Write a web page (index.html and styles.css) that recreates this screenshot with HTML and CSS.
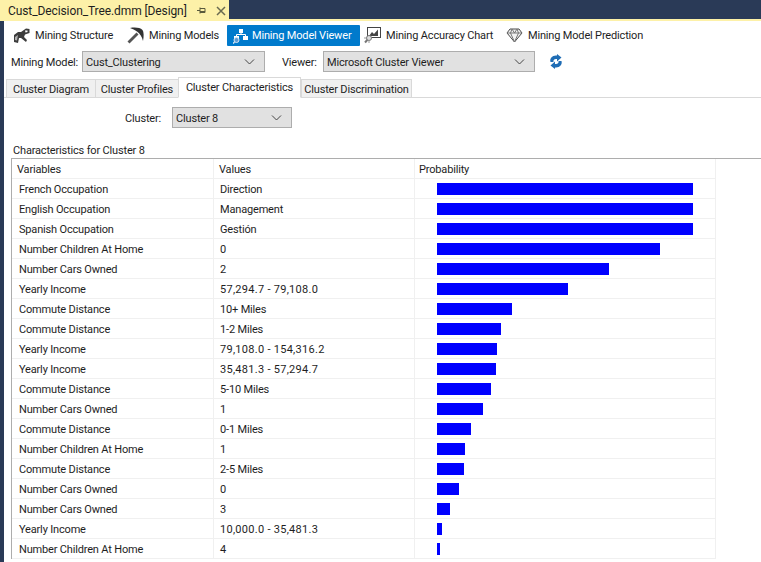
FILE: index.html
```html
<!doctype html>
<html lang="en">
<head>
    <meta charset="UTF-8">
    <title>Cust_Decision_Tree.dmm [Design]</title>
    <link rel="stylesheet" href="styles.css">
</head>
<body>
<div class="doc-bar">
    <div class="doc-tab">
        <span class="doc-title">Cust_Decision_Tree.dmm [Design]</span>
        <svg class="doc-pin" width="9" height="9" viewBox="0 0 9 9"><path d="M0 4.500H3M3 1.500V7.500M3 2.500H8V6.500H3M3 5.500H8" fill="none" stroke="#5a5a3c"/></svg>
        <svg class="doc-close" width="10" height="10" viewBox="0 0 10 10"><path d="M1 1L9 9M9 1L1 9" stroke="#6a6a50" stroke-width="1.500"/></svg>
    </div>
</div>
<div class="doc-line"></div>
<div class="page">
    <div class="toolbar">
        <a class="tool tool-structure">
            <svg width="17" height="17" viewBox="0 0 17 17"><path d="M1 8L5 5H8L13 1.500L16.500 2V6L12 7.500L11 10L14 13L13 15L8 11L6 11L5 16L1 15Z" fill="#3c3c3c"/><path d="M12 3.500H14.500V5L12.500 5.500Z" fill="#fff"/><path d="M2 10L5 8L4 13.500L2 13Z" fill="#b0b0b0"/></svg>
            <span>Mining Structure</span>
        </a>
        <a class="tool tool-models">
            <svg width="17" height="17" viewBox="0 0 17 17"><path d="M0.500 14.500L9.500 5.500L11.500 7.500L2.500 16.500Z" fill="#555"/><path d="M3 1C8 0 13 0.500 15.500 3C16.800 5 17 9 16 14C15 10 13 6.500 10 4.500C8 3 5.500 2 3 1Z" fill="#333"/></svg>
            <span>Mining Models</span>
        </a>
        <a class="tool tool-viewer">
            <svg width="16" height="16" viewBox="0 0 16 16"><path d="M6 1H10V5H6ZM1 8H6V12H1ZM10 8H15V12H10Z" fill="#fff"/><path d="M8 5V7M3.500 8V6.500H12.500V8" fill="none" stroke="#fff"/><circle cx="3.500" cy="12" r="2.500" fill="#5c9bd4" stroke="#d8e6f2"/><path d="M1.500 14L0 15.500" stroke="#d8e6f2" stroke-width="1.500"/></svg>
            <span>Mining Model Viewer</span>
        </a>
        <a class="tool tool-accuracy">
            <svg width="17" height="17" viewBox="0 0 17 17"><rect x="3.500" y="0.500" width="13" height="10" fill="#fff" stroke="#444"/><path d="M5 9L8 5L10 7L14 2.500V9Z" fill="#444"/><path d="M5 11L1 15.500" stroke="#777" stroke-width="2"/><circle cx="5" cy="11" r="2.500" fill="#ddd" stroke="#777"/><path d="M5 13V16M2 11H0" stroke="#999"/></svg>
            <span>Mining Accuracy Chart</span>
        </a>
        <a class="tool tool-prediction">
            <svg width="17" height="15" viewBox="0 0 17 15"><path d="M4 1H13L16 5L8.500 14L1 5Z" fill="#f2f2f2" stroke="#4a4a4a"/><path d="M1 5H16M6 1L4.500 5L8.500 14L12.500 5L11 1M6 1L8.500 5L11 1" fill="none" stroke="#777"/></svg>
            <span>Mining Model Prediction</span>
        </a>
    </div>

    <div class="model-row">
        <label class="model-label">Mining Model:</label>
        <div class="combo combo-model"><span>Cust_Clustering</span><svg width="11" height="6" viewBox="0 0 11 6"><path d="M1 0.500L5.500 5L10 0.500" fill="none" stroke="#444"/></svg></div>
        <label class="viewer-label">Viewer:</label>
        <div class="combo combo-viewer"><span>Microsoft Cluster Viewer</span><svg width="11" height="6" viewBox="0 0 11 6"><path d="M1 0.500L5.500 5L10 0.500" fill="none" stroke="#444"/></svg></div>
        <svg class="refresh" width="14" height="15" viewBox="0 0 14 15">
            <path d="M1.500 8C0.500 4.500 3 1.500 7 1.500H8V0L12.500 3.500L8 7.500V5H7C5 5 4 6.500 4.500 8Z" fill="#1f6db5"/>
            <path d="M12.500 7C13.500 10.500 11 13.500 7 13.500H6V15L1.500 11.500L6 7.500V10H7C9 10 10 8.500 9.500 7Z" fill="#1f6db5"/>
        </svg>
    </div>

    <div class="tabs">
        <div class="tab tab-diagram">Cluster Diagram</div>
        <div class="tab tab-profiles">Cluster Profiles</div>
        <div class="tab tab-active">Cluster Characteristics</div>
        <div class="tab tab-discrimination">Cluster Discrimination</div>
    </div>

    <div class="cluster-row">
        <label class="cluster-label">Cluster:</label>
        <div class="combo combo-cluster"><span>Cluster 8</span><svg width="11" height="6" viewBox="0 0 11 6"><path d="M1 0.500L5.500 5L10 0.500" fill="none" stroke="#444"/></svg></div>
    </div>

    <div class="caption">Characteristics for Cluster 8</div>

    <div class="grid">
        <div class="row head">
            <div class="cell">Variables</div>
            <div class="cell">Values</div>
            <div class="cell">Probability</div>
        </div>
        <div class="row"><div class="cell">French Occupation</div><div class="cell">Direction</div><div class="cell bar-cell"><div class="bar" style="width:256px"></div></div></div>
        <div class="row"><div class="cell">English Occupation</div><div class="cell">Management</div><div class="cell bar-cell"><div class="bar" style="width:256px"></div></div></div>
        <div class="row"><div class="cell">Spanish Occupation</div><div class="cell">Gestión</div><div class="cell bar-cell"><div class="bar" style="width:256px"></div></div></div>
        <div class="row"><div class="cell">Number Children At Home</div><div class="cell">0</div><div class="cell bar-cell"><div class="bar" style="width:223px"></div></div></div>
        <div class="row"><div class="cell">Number Cars Owned</div><div class="cell">2</div><div class="cell bar-cell"><div class="bar" style="width:172px"></div></div></div>
        <div class="row"><div class="cell">Yearly Income</div><div class="cell num">57,294.7 - 79,108.0</div><div class="cell bar-cell"><div class="bar" style="width:131px"></div></div></div>
        <div class="row"><div class="cell">Commute Distance</div><div class="cell">10+ Miles</div><div class="cell bar-cell"><div class="bar" style="width:75px"></div></div></div>
        <div class="row"><div class="cell">Commute Distance</div><div class="cell">1-2 Miles</div><div class="cell bar-cell"><div class="bar" style="width:64px"></div></div></div>
        <div class="row"><div class="cell">Yearly Income</div><div class="cell num">79,108.0 - 154,316.2</div><div class="cell bar-cell"><div class="bar" style="width:60px"></div></div></div>
        <div class="row"><div class="cell">Yearly Income</div><div class="cell num">35,481.3 - 57,294.7</div><div class="cell bar-cell"><div class="bar" style="width:59px"></div></div></div>
        <div class="row"><div class="cell">Commute Distance</div><div class="cell">5-10 Miles</div><div class="cell bar-cell"><div class="bar" style="width:54px"></div></div></div>
        <div class="row"><div class="cell">Number Cars Owned</div><div class="cell">1</div><div class="cell bar-cell"><div class="bar" style="width:46px"></div></div></div>
        <div class="row"><div class="cell">Commute Distance</div><div class="cell">0-1 Miles</div><div class="cell bar-cell"><div class="bar" style="width:34px"></div></div></div>
        <div class="row"><div class="cell">Number Children At Home</div><div class="cell">1</div><div class="cell bar-cell"><div class="bar" style="width:28px"></div></div></div>
        <div class="row"><div class="cell">Commute Distance</div><div class="cell">2-5 Miles</div><div class="cell bar-cell"><div class="bar" style="width:27px"></div></div></div>
        <div class="row"><div class="cell">Number Cars Owned</div><div class="cell">0</div><div class="cell bar-cell"><div class="bar" style="width:22px"></div></div></div>
        <div class="row"><div class="cell">Number Cars Owned</div><div class="cell">3</div><div class="cell bar-cell"><div class="bar" style="width:13px"></div></div></div>
        <div class="row"><div class="cell">Yearly Income</div><div class="cell num">10,000.0 - 35,481.3</div><div class="cell bar-cell"><div class="bar" style="width:5px"></div></div></div>
        <div class="row"><div class="cell">Number Children At Home</div><div class="cell">4</div><div class="cell bar-cell"><div class="bar" style="width:3px"></div></div></div>
    </div>
</div>
</body>
</html>
```

FILE: styles.css
```css
* {
    margin: 0;
    padding: 0;
    box-sizing: border-box;
}

html,
body {
    height: 100%;
    overflow: hidden;
}

svg {
    flex: none;
}

body {
    background-color: #fff;
    color: #1e1e1e;
    font-family: "Roboto", "Open Sans", sans-serif;
    font-size: 11px;
    letter-spacing: -0.17px;
    line-height: 16px;
}

.doc-bar {
    height: 19px;
    background-color: #2a3a57;
}

.doc-tab {
    display: flex;
    align-items: center;
    width: 229px;
    height: 21px;
    padding-left: 8px;
    background-color: #fdf1a8;
    font-size: 12px;
    letter-spacing: -0.1px;
}

.doc-title {
    width: 189px;
    white-space: nowrap;
}

.doc-close {
    margin-left: 10px;
}

.doc-line {
    height: 2px;
    background-color: #fdf1a8;
}

.page {
    height: 541px;
    border-left: 4px solid #2a3a57;
    overflow: hidden;
}

.toolbar {
    display: flex;
    align-items: center;
    height: 30px;
    padding-bottom: 1px;
}

.tool {
    display: flex;
    align-items: center;
    height: 21px;
    gap: 5px;
    white-space: nowrap;
}

.tool-structure {
    width: 114px;
    margin-left: 9px;
}

.tool-models {
    width: 100px;
}

.tool-viewer {
    width: 133px;
    padding-left: 6px;
    gap: 3px;
    background-color: #007acc;
    color: #fff;
    border-radius: 1px;
}

.tool-accuracy {
    width: 142px;
    margin-left: 4px;
}

.tool-prediction {
    width: 140px;
}

.model-row {
    display: flex;
    align-items: center;
    height: 21px;
    padding-left: 7px;
}

.model-label {
    width: 71px;
    padding-top: 3px;
    white-space: nowrap;
}

.viewer-label {
    width: 41px;
    margin-left: 17px;
    padding-top: 3px;
}

.combo {
    display: flex;
    align-items: center;
    justify-content: space-between;
    height: 21px;
    padding: 0 9px 0 3px;
    background-color: #e1e1e1;
    border: 1px solid #adadad;
    white-space: nowrap;
}

.combo span {
    padding-top: 2px;
}

.combo-model {
    width: 183px;
}

.combo-viewer {
    width: 212px;
}

.combo-cluster {
    width: 120px;
}

.refresh {
    margin-left: 14px;
}

.tabs {
    display: flex;
    align-items: flex-end;
    height: 21px;
    margin-top: 5px;
    border-bottom: 1px solid #d9d9d9;
    padding-left: 2px;
}

.tab {
    height: 19px;
    margin-bottom: -1px;
    padding-top: 2px;
    background-color: #f0f0f0;
    border: 1px solid #d9d9d9;
    text-align: center;
    white-space: nowrap;
}

.tab-diagram {
    width: 90px;
}

.tab-profiles {
    width: 84px;
    margin-left: -1px;
}

.tab-active {
    width: 123px;
    height: 21px;
    margin-left: -1px;
    background-color: #fff;
    border-bottom-color: #fff;
}

.tab-discrimination {
    width: 111px;
}

.cluster-row {
    display: flex;
    align-items: center;
    height: 21px;
    margin-top: 9px;
}

.cluster-label {
    width: 47px;
    margin-left: 121px;
    padding-top: 3px;
}

.caption {
    margin-top: 15px;
    margin-left: 9px;
    height: 15px;
    white-space: nowrap;
}

.grid {
    margin-left: 7px;
    border-top: 1px solid #adadad;
    border-left: 1px solid #adadad;
}

.row {
    display: grid;
    grid-template-columns: 202px 201px 301px;
    height: 20px;
}

.cell {
    display: flex;
    align-items: center;
    padding-top: 2px;
    padding-left: 6px;
    border-right: 1px solid #f0f0f0;
    border-bottom: 1px solid #f0f0f0;
    white-space: nowrap;
}

.cell:first-child {
    padding-left: 7px;
}

.num {
    letter-spacing: 0.28px;
}

.head .cell {
    padding-top: 3px;
    padding-left: 5px;
}

.head .cell:last-child {
    padding-left: 4px;
}

.bar-cell {
    padding-top: 0;
    padding-left: 22px;
}

.bar {
    height: 12px;
    background-color: #00f;
}
```
